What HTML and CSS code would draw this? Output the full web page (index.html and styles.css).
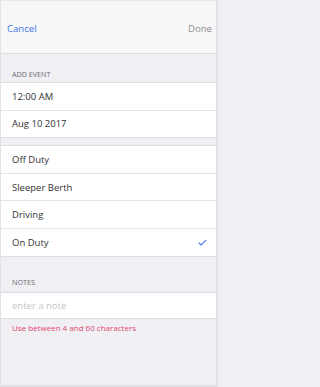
FILE: index.html
```html
<!DOCTYPE html>
<html>
<head>
<meta charset="utf-8">
<link rel="stylesheet" href="styles.css">
</head>
<body>
<div class="app">
  <header class="nav">
    <span class="nav-btn cancel">Cancel</span>
    <span class="nav-btn done">Done</span>
  </header>
  <div class="section-label first">ADD EVENT</div>
  <ul class="list">
    <li class="row">12:00 AM</li>
    <li class="row">Aug 10 2017</li>
  </ul>
  <div class="gap"></div>
  <ul class="list">
    <li class="row">Off Duty</li>
    <li class="row">Sleeper Berth</li>
    <li class="row">Driving</li>
    <li class="row checked">On Duty
      <svg class="check" width="9" height="7" viewBox="0 0 9 7"><path d="M0.8 3.8 L3.2 6 L8.2 0.8" fill="none" stroke="#4a7cf3" stroke-width="1.2"/></svg>
    </li>
  </ul>
  <div class="section-label notes">NOTES</div>
  <ul class="list">
    <li class="row placeholder">enter a note</li>
  </ul>
  <div class="error">Use between 4 and 60 characters</div>
</div>
</body>
</html>
```
FILE: styles.css
```css
html, body {
  margin: 0;
  padding: 0;
}
body {
  font-family: "Open Sans", "Noto Sans", sans-serif;
  background: #efeff4;
}
.app {
  box-sizing: border-box;
  width: 218px;
  height: 387px;
  border-left: 1px solid #e2e2e6;
  border-top: 1px solid #e8e8ec;
  border-right: 2px solid #e2e2e6;
  border-bottom: 2px solid #e2e2e6;
  background: #efeff4;
  overflow: hidden;
}
.nav {
  height: 53px;
  background: #f7f7f7;
  border-bottom: 1px solid #dedee2;
  display: flex;
  justify-content: space-between;
  align-items: center;
  padding: 2px 4px 0 6px;
  box-sizing: border-box;
}
.nav-btn {
  font-size: 9.6px;
}
.cancel {
  color: #3f72f0;
}
.done {
  color: #8e8e93;
}
.section-label {
  font-size: 7.2px;
  color: #6d6d72;
  padding-left: 11px;
  box-sizing: border-box;
  display: flex;
  align-items: flex-end;
}
.section-label.first {
  height: 28px;
  padding-bottom: 3px;
}
.section-label.notes {
  height: 35px;
  padding-bottom: 5px;
}
.list {
  list-style: none;
  margin: 0;
  padding: 0;
  background: #fff;
  border-top: 1px solid #dedee2;
  border-bottom: 1px solid #dedee2;
}
.row {
  height: 26.6px;
  display: flex;
  align-items: center;
  justify-content: space-between;
  padding: 0 9px 0 11px;
  font-size: 9.5px;
  color: #333;
}
.row + .row {
  border-top: 1px solid #e4e4e8;
}
.list .placeholder {
  height: 25px;
  color: #c4c4c8;
}
.gap {
  height: 7px;
}
.error {
  font-size: 8px;
  color: #e2466c;
  padding: 3px 0 0 11px;
}
```
